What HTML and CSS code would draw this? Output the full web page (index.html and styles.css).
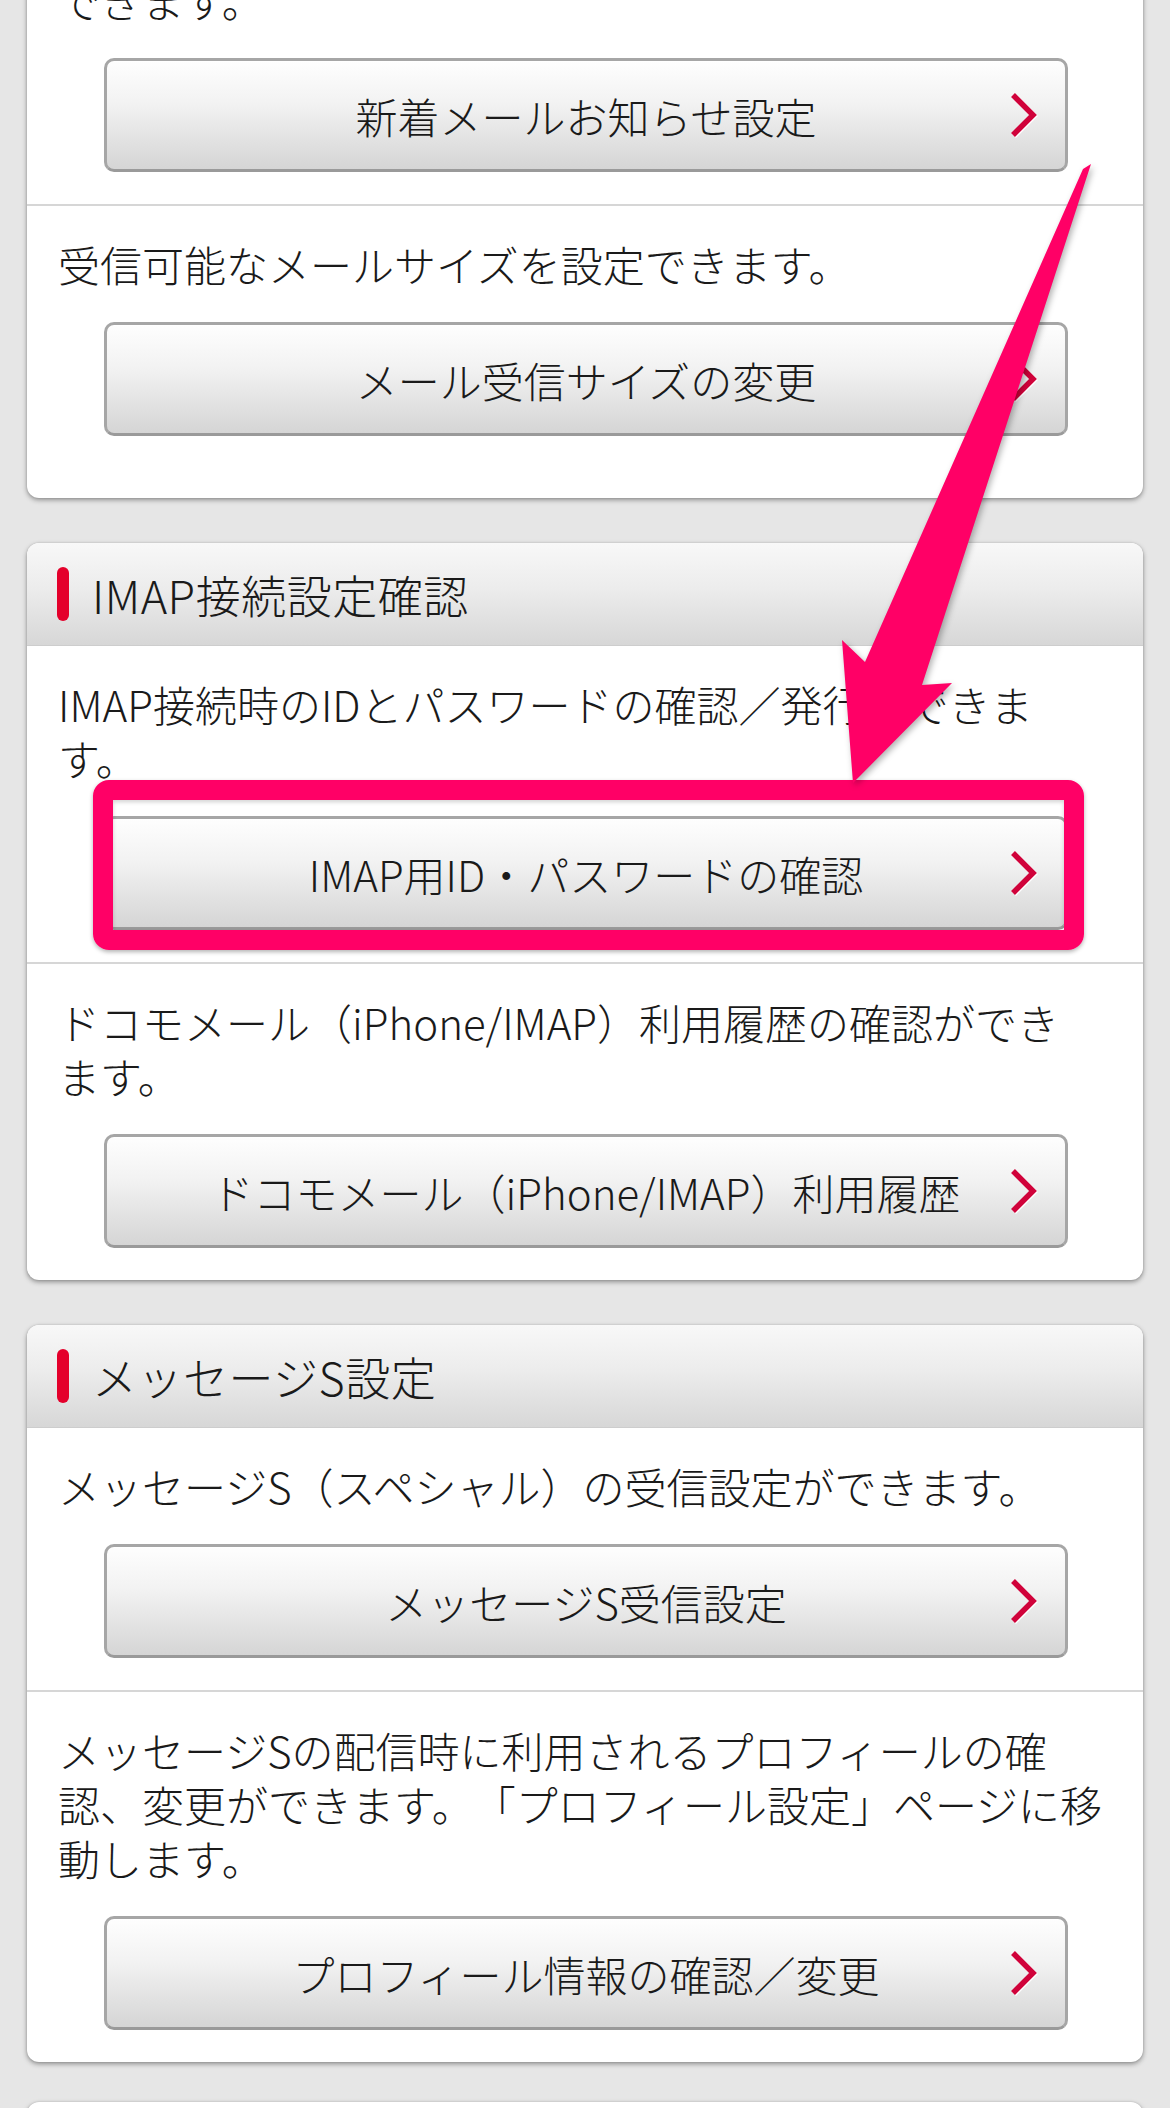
FILE: index.html
```html
<!DOCTYPE html>
<html lang="ja">
<head>
<meta charset="utf-8">
<title>メール設定</title>
<link rel="stylesheet" href="styles.css">
</head>
<body>
<main class="page">
  <section class="card card--scrolled">
    <div class="item">
      <p class="desc">できます。</p>
      <a class="btn" href="#"><span class="btn-label">新着メールお知らせ設定</span><svg class="chev" viewBox="0 0 30 46" width="30" height="46"><path d="M6 3 L26 23 L6 43"/></svg></a>
    </div>
    <div class="item item--tall">
      <p class="desc">受信可能なメールサイズを設定できます。</p>
      <a class="btn" href="#"><span class="btn-label">メール受信サイズの変更</span><svg class="chev" viewBox="0 0 30 46" width="30" height="46"><path d="M6 3 L26 23 L6 43"/></svg></a>
    </div>
  </section>

  <section class="card">
    <h2 class="card-head"><span class="bar"></span>IMAP接続設定確認</h2>
    <div class="item">
      <p class="desc">IMAP接続時のIDとパスワードの確認／発行ができま<br>す。</p>
      <div class="btn-wrap">
        <a class="btn" href="#"><span class="btn-label">IMAP用ID・パスワードの確認</span><svg class="chev" viewBox="0 0 30 46" width="30" height="46"><path d="M6 3 L26 23 L6 43"/></svg></a>
        <span class="highlight"></span>
      </div>
    </div>
    <div class="item">
      <p class="desc">ドコモメール（iPhone/IMAP）利用履歴の確認ができ<br>ます。</p>
      <a class="btn" href="#"><span class="btn-label">ドコモメール（iPhone/IMAP）利用履歴</span><svg class="chev" viewBox="0 0 30 46" width="30" height="46"><path d="M6 3 L26 23 L6 43"/></svg></a>
    </div>
  </section>

  <section class="card">
    <h2 class="card-head"><span class="bar"></span>メッセージS設定</h2>
    <div class="item">
      <p class="desc">メッセージS（スペシャル）の受信設定ができます。</p>
      <a class="btn" href="#"><span class="btn-label">メッセージS受信設定</span><svg class="chev" viewBox="0 0 30 46" width="30" height="46"><path d="M6 3 L26 23 L6 43"/></svg></a>
    </div>
    <div class="item">
      <p class="desc">メッセージSの配信時に利用されるプロフィールの確<br>認、変更ができます。「プロフィール設定」ページに移<br>動します。</p>
      <a class="btn" href="#"><span class="btn-label">プロフィール情報の確認／変更</span><svg class="chev" viewBox="0 0 30 46" width="30" height="46"><path d="M6 3 L26 23 L6 43"/></svg></a>
    </div>
  </section>

  <section class="card card--next"></section>
</main>

<svg class="arrow" width="1170" height="2108" viewBox="0 0 1170 2108">
  <polygon points="1083,169 1091,164 922,685 952,683 853,783 842,640 865,662"/>
</svg>
</body>
</html>
```

FILE: styles.css
```css
html, body {
  margin: 0;
  padding: 0;
}

body {
  background: #e6e6e6;
  font-family: "Noto Sans CJK JP", "Noto Sans", sans-serif;
  font-weight: 300;
  color: #1a1a1a;
  overflow: hidden;
  height: 2108px;
  text-spacing-trim: space-all;
}

.page {
  display: flex;
  flex-direction: column;
  gap: 45px;
  padding: 0 27px;
}

.card {
  background: #fff;
  border-radius: 12px;
  box-shadow: 0 2px 5px rgba(0, 0, 0, 0.38), 0 0 2px rgba(0, 0, 0, 0.15);
  overflow: hidden;
}

.card--scrolled {
  margin-top: -58px;
}

.card--next {
  height: 200px;
  margin-top: -5px;
}

.card-head {
  margin: 0;
  height: 103px;
  box-sizing: border-box;
  display: flex;
  align-items: center;
  padding-left: 30px;
  background: linear-gradient(#f8f8f8, #ececec 45%, #d7d7d7);
  border-bottom: 1px solid #cdcdcd;
  font-size: 45px;
  font-weight: 300;
  color: #1a1a1a;
  letter-spacing: 0.5px;
}

.bar {
  width: 12px;
  height: 54px;
  border-radius: 6px;
  background: #e4002b;
  margin-right: 23px;
  flex: none;
}

.item {
  padding: 31px 31px 32px;
  border-bottom: 2px solid #d6d6d6;
}

.item:last-child {
  border-bottom: none;
}

.item--tall {
  padding-bottom: 62px;
}

.desc {
  margin: 0 0 31px;
  font-size: 42px;
  line-height: 54px;
  white-space: nowrap;
}

.btn-wrap {
  position: relative;
  margin: 0 44px 0 46px;
}

.btn-wrap .btn {
  margin: 0;
}

.btn {
  display: grid;
  grid-template-columns: 1fr auto 1fr;
  align-items: center;
  height: 114px;
  box-sizing: border-box;
  margin: 0 44px 0 46px;
  border: 3px solid #a6a6a6;
  border-bottom-color: #9a9a9a;
  border-radius: 10px;
  background: linear-gradient(#fefefe, #f2f2f2 40%, #d5d5d5);
  box-shadow: inset 0 1px 0 #fff;
  text-decoration: none;
  color: #1a1a1a;
  font-size: 42px;
  white-space: nowrap;
}

.btn-label {
  grid-column: 2;
}

.chev {
  grid-column: 3;
  justify-self: end;
  margin-right: 28px;
  fill: none;
  stroke: #d0023a;
  stroke-width: 5.5;
  stroke-linecap: butt;
  stroke-linejoin: miter;
  filter: drop-shadow(1px 1px 0 #ffffff);
}

.highlight {
  position: absolute;
  top: -36px;
  left: -11px;
  right: -16px;
  bottom: -20px;
  border: 20px solid #ff0066;
  border-radius: 16px;
  box-shadow: 0 2px 4px rgba(0, 0, 0, 0.3), inset 0 2px 4px rgba(0, 0, 0, 0.18);
  pointer-events: none;
}

.arrow {
  position: absolute;
  top: 0;
  left: 0;
  pointer-events: none;
}

.arrow polygon {
  fill: #ff0066;
  filter: drop-shadow(2px 3px 3px rgba(0, 0, 0, 0.3));
}
```
